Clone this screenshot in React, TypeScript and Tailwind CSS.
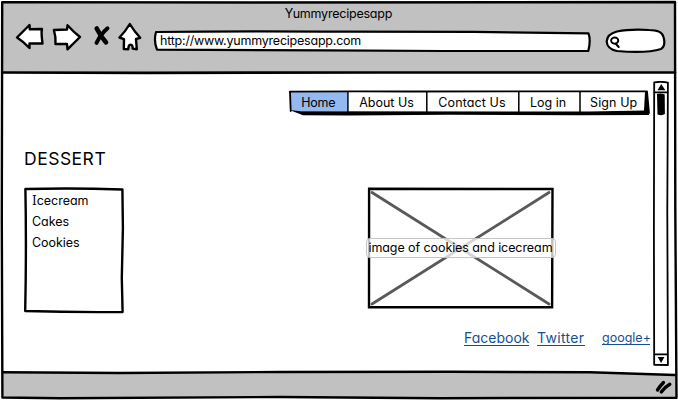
import React from "react";

const ink = {
  fill: "none",
  stroke: "#000",
  strokeWidth: 2.4,
  strokeLinecap: "round",
  strokeLinejoin: "round",
} as const;

function Toolbar() {
  return (
    <div className="flex h-8 items-start pl-[15px]">
      <svg className="block h-8 w-[30px] shrink-0" viewBox="0 0 30 32">
        <path {...ink} fill="#fff" d="M2 15.5 L14.5 3 L14.8 7.3 L27 7 Q26 10 27.5 21.5 L14.5 21.5 L14.5 26 Q9 20 2 15.5Z" />
      </svg>
      <svg className="ml-[7px] block h-8 w-[31px] shrink-0" viewBox="0 0 31 32">
        <path {...ink} fill="#fff" d="M1.9 8 L15 7.5 L15.5 3.3 Q21.5 10 28 15 L15.5 27.3 L15 22 L3.5 22 Q4 15 1.9 8Z" />
      </svg>
      <svg className="ml-[9px] block h-8 w-5 shrink-0" viewBox="0 0 20 32">
        <path {...ink} strokeWidth="4.6" d="M4.7 6.5 Q9 15 14 20.3" />
        <path {...ink} strokeWidth="4" d="M15.5 6.3 Q9 12 4.5 20.8" />
      </svg>
      <svg className="ml-[5px] block h-8 w-[26px] shrink-0" viewBox="0 0 26 32">
        <path {...ink} fill="#fff" d="M12.8 2 Q17 9 23.2 15.8 L19 17 L19.8 27.2 L15.7 26.6 Q15.6 22.5 13.7 22.6 Q11.5 22.3 11.3 27.2 L6.8 27 L7 17.2 L2.4 15.5 Q8 10 12.8 2Z" />
      </svg>
      <div className="relative ml-[11px] mt-[9px] flex h-[21px] w-[437px] items-center">
        <svg className="absolute inset-0 h-full w-full overflow-visible" viewBox="0 0 437 21">
          <path {...ink} strokeWidth="2.2" fill="#fff" d="M2 1 Q80 0 190 .7 L320 .8 L434.5 2.4 Q437 9 434.3 20 L290 20 L170 19.3 L3 18.7 Q-.5 10 2 1Z" />
        </svg>
        <span className="relative pl-1.5 text-[12.5px] leading-none tracking-[-0.22px]">http://www.yummyrecipesapp.com</span>
      </div>
      <svg className="ml-[14px] mt-1.5 block h-[26px] w-[62px] shrink-0" viewBox="0 0 62 26">
        <path {...ink} strokeWidth="2.2" fill="#fff" d="M12 3.5 Q25 .8 44 2 Q57 2 58.5 9 Q61 18 56 21 Q42 25.5 12 23 Q2 21 1.7 13.5 Q2 6 12 3.5Z" />
        <ellipse {...ink} strokeWidth="1.9" cx="9.7" cy="12.6" rx="3.6" ry="3.1" />
        <path {...ink} strokeWidth="2" d="M11 16 L13.7 19" />
      </svg>
    </div>
  );
}

function Nav() {
  return (
    <nav className="relative ml-[289px] mt-[18px] flex h-[25px] w-[360px] text-[12.5px] leading-[23px]">
      <div className="my-px ml-px h-[19px] w-[57px] bg-[#94b9f0]" />
      <svg className="absolute inset-0 h-full w-full overflow-visible" viewBox="0 0 360 25">
        <path {...ink} strokeWidth="1.8" d="M1 .6 Q60 .2 120 .5 L358 .4 L360 22" />
        <path {...ink} strokeWidth="1.8" d="M1 1 L1.7 20" />
        <path {...ink} strokeWidth="1.5" d="M58.9 1 V21 M137.8 1 V21 M229.8 1 V21 M291 1 V21" />
        <path d="M.5 19 L12 20.2 L300 20.5 L355 19.5 L356 1 L358.3 1 L360 24 L290 24.2 L160 23.7 L60 24.4 L14 24.2 Z" />
      </svg>
      <div className="absolute inset-0 flex text-center">
        <a className="w-[58px] pl-px tracking-[-0.2px]">Home</a>
        <a className="w-[80px]">About Us</a>
        <a className="w-[92px] tracking-[0.1px]">Contact Us</a>
        <a className="w-[61px]">Log in</a>
        <a className="w-[71px] tracking-[0.1px]">Sign Up</a>
      </div>
    </nav>
  );
}

function DessertList() {
  return (
    <ul className="relative h-[125px] w-[100px] pl-2 pt-[3px] text-[12.5px] tracking-[-0.03px]">
      <svg className="absolute inset-0 h-full w-full overflow-visible" viewBox="0 0 100 125">
        <path {...ink} d="M1.4 1 Q50 -.2 98.4 1.5 L98.9 40 L97.8 90 L98.6 124 Q50 124.5 1.2 123 Q2.5 60 1.4 1Z" />
      </svg>
      <li className="relative h-[21px] leading-5">
        <span className="font-['DejaVu_Serif'] text-[12px] leading-none">I</span>cecream
      </li>
      <li className="relative h-[21px] leading-5">Cakes</li>
      <li className="relative h-[21px] leading-5">Cookies</li>
    </ul>
  );
}

function ImagePlaceholder() {
  return (
    <div className="relative flex h-[120px] w-[187px] items-center justify-center">
      <svg className="absolute inset-0 h-full w-full overflow-visible" viewBox="0 0 187 120">
        <path {...ink} strokeLinejoin="miter" d="M2.1 .7 L185.5 1 L185.1 119.2 L2 119.2Z" />
        <path {...ink} stroke="#595959" strokeWidth="2.8" d="M5 4.5 L182 116 M182 4.5 L5 116" />
      </svg>
      <div className="relative -mx-px flex h-5 w-[190px] shrink-0 items-center justify-center whitespace-nowrap rounded-[4px] border border-[#c5c5c5] bg-white/75 text-[12.5px] leading-none tracking-[-0.08px]">
        image of cookies and icecream
      </div>
    </div>
  );
}

function Scrollbar() {
  return (
    <svg className="ml-[2.5px] mt-[7.5px] block h-[286px] w-[18px] shrink-0" viewBox="0 0 18 286">
      <path {...ink} strokeWidth="1.8" d="M1.2 1.4 Q8 .2 14.9 1.6 L14.3 130 L14.9 284 L1.2 283.8 L.9 150Z M1 11.4 H15 M1 273.4 H15" />
      <path d="M8.2 3 L12.4 9.3 H4.5Z M4.7 276 H11.4 L8.1 282Z" />
      <path d="M4 13 Q8 12 11.7 13.5 L11.9 33 Q9 35 4.5 33.5Z" />
    </svg>
  );
}

export default function App() {
  return (
    <div className="relative flex h-[400px] w-[678px] flex-col overflow-hidden bg-white font-[Inter,sans-serif] text-black [font-feature-settings:'cv11']">
      <header className="ml-[3px] mr-[2px] mt-0.5 h-[70px] bg-[#c1c1c1]">
        <h1 className="h-5 pr-[2px] text-center text-[12.5px] leading-[23px] tracking-[-0.22px]">Yummyrecipesapp</h1>
        <div className="-ml-[3px] -mr-[2px]">
          <Toolbar />
        </div>
      </header>
      <main className="flex h-[300px] pt-px">
        <div className="flex h-[299px] w-[650px] shrink-0 flex-col">
          <Nav />
          <div className="ml-6 mt-[31px] flex h-6 items-center text-[17.5px] leading-6">
            <h2 className="tracking-[0.5px]">DESSERT</h2>
          </div>
          <div className="ml-6 mt-[17px] flex h-[125px] items-start justify-between pr-[96px]">
            <DessertList />
            <ImagePlaceholder />
          </div>
          <div className="mt-[15px] flex items-start pl-[464px] text-[#154f94]">
            <a className="h-[18px] w-[65px] whitespace-nowrap border-b border-[#154f94] text-[14px] leading-5">Facebook</a>
            <a className="ml-2 h-[18px] w-[48px] whitespace-nowrap border-b border-[#154f94] text-[14px] leading-5 tracking-[0.3px]">Twitter</a>
            <a className="ml-[17px] h-[17px] w-[48px] whitespace-nowrap border-b border-[#154f94] text-[12.5px] leading-5">google+</a>
          </div>
        </div>
        <Scrollbar />
      </main>
      <footer className="ml-[3px] mr-[2px] flex h-[26px] justify-end bg-[#c1c1c1]">
        <svg className="mr-[3px] mt-[7px] block h-4 w-[18px]" viewBox="0 0 18 16">
          <path {...ink} strokeWidth="3.4" d="M2.5 11 Q5 7 8.5 3.5 M6.3 13 Q10 8 14.8 5.3" />
        </svg>
      </footer>
      <svg className="pointer-events-none absolute inset-0 h-full w-full" viewBox="0 0 678 400">
        <path fill="#fff" d="M580 371 L675 371 L675 375 Z" />
        <path {...ink} d="M2.2 2.1 L250 2.5 L675 2 L675.3 210 L676.5 397.7 L440 398.2 L280 397 L60 398.3 L2.4 397.5 L1.8 220Z" />
        <path {...ink} strokeWidth="2.7" d="M3 72.5 L145 72.8 L380 72.5 L675 72.5" />
        <path {...ink} d="M3 372.3 L120 373 L280 372 L450 371.8 L590 372.3 L675 375" />
      </svg>
    </div>
  );
}
